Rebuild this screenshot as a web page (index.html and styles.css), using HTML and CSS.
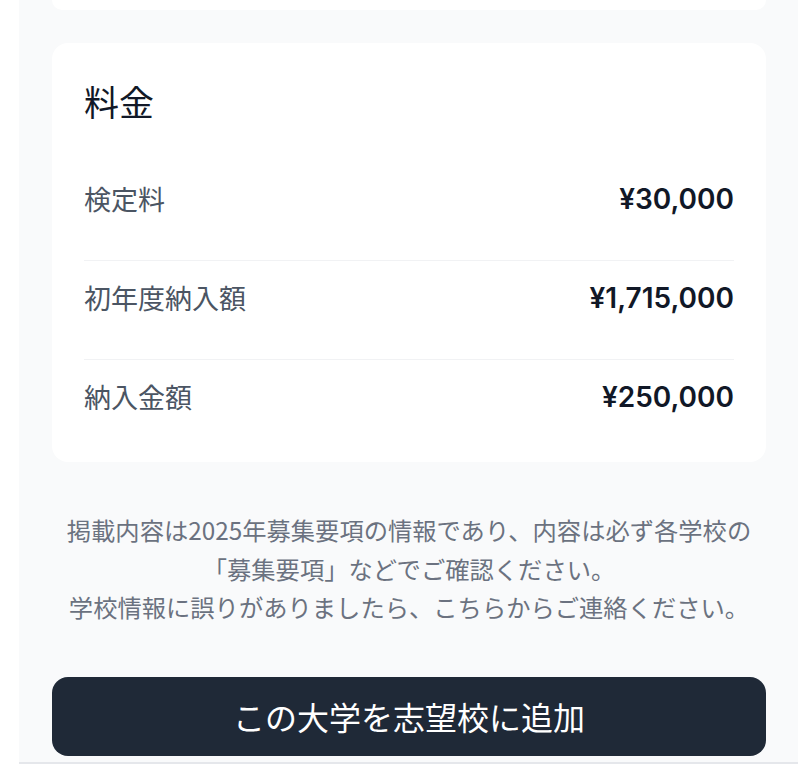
FILE: index.html
```html
<!DOCTYPE html>
<html lang="ja">
<head>
<meta charset="utf-8">
<title>料金</title>
<link rel="stylesheet" href="styles.css">
</head>
<body>
<div class="page">
  <div class="prev-card"></div>
  <section class="card">
    <h2 class="card-title">料金</h2>
    <div class="row first">
      <span class="label">検定料</span>
      <span class="value">¥30,000</span>
    </div>
    <div class="row">
      <span class="label">初年度納入額</span>
      <span class="value">¥1,715,000</span>
    </div>
    <div class="row last">
      <span class="label">納入金額</span>
      <span class="value">¥250,000</span>
    </div>
  </section>
  <p class="notice">掲載内容は2025年募集要項の情報であり、内容は必ず各学校の<br>「募集要項」などでご確認ください。<br>学校情報に誤りがありましたら、こちらからご連絡ください。</p>
  <button class="cta" type="button">この大学を志望校に追加</button>
</div>
</body>
</html>
```

FILE: styles.css
```css
html, body {
  margin: 0;
  padding: 0;
  background: #ffffff;
}

body {
  font-family: "Noto Sans CJK JP", "Noto Sans", sans-serif;
  color: #111827;
}

.page {
  margin-left: 19px;
  background: #f9fafb;
  padding: 0 32px 6px 33px;
  border-bottom: 2px solid #e5e7eb;
  display: flex;
  flex-direction: column;
}

.prev-card {
  height: 10px;
  background: #ffffff;
  border-radius: 0 0 16px 16px;
}

.card {
  margin-top: 33px;
  background: #ffffff;
  border-radius: 16px;
  padding: 32px 32px 6px;
  height: 419px;
  box-sizing: border-box;
}

.card-title {
  margin: 0 0 35px;
  font-size: 35px;
  line-height: 52px;
  font-weight: 400;
  color: #111827;
}

.row {
  display: flex;
  justify-content: space-between;
  align-items: center;
  height: 40px;
  padding: 17px 0 41px;
  border-bottom: 1px solid #f1f2f4;
}

.row.last {
  border-bottom: none;
}

.label {
  font-size: 27px;
  line-height: 40px;
  color: #4b5563;
}

.value {
  font-family: "Inter", "Noto Sans", sans-serif;
  font-size: 28px;
  line-height: 40px;
  font-weight: 600;
  color: #111827;
}

.notice {
  margin: 49px 0 0;
  text-align: center;
  font-size: 24.3px;
  line-height: 38.5px;
  color: #6b7280;
}

.cta {
  margin-top: 50px;
  height: 79px;
  border: none;
  border-radius: 16px;
  background: #1f2937;
  color: #ffffff;
  font-family: "Noto Sans CJK JP", "Noto Sans", sans-serif;
  font-size: 32px;
  font-weight: 400;
  cursor: pointer;
}
```
